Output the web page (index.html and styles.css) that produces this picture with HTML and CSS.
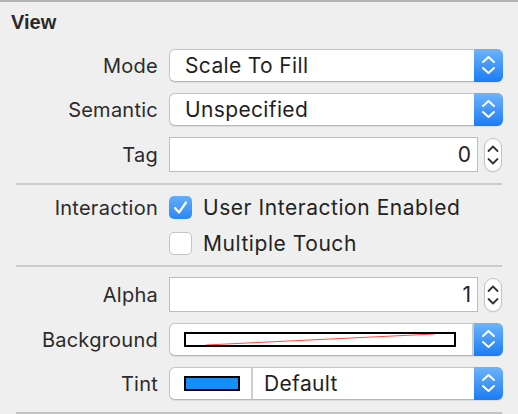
FILE: index.html
```html
<!DOCTYPE html>
<html>
<head>
<meta charset="utf-8">
<link rel="stylesheet" href="styles.css">
</head>
<body>
<div class="panel">
  <div class="title">View</div>

  <div class="section top">
    <div class="row">
      <div class="label">Mode</div>
      <div class="popup">
        <div class="popup-text">Scale To Fill</div>
        <div class="popup-btn"><svg width="29" height="33" viewBox="0 0 29 33"><path d="M9 13 L14.5 8 L20 13 M9 19 L14.5 24 L20 19" fill="none" stroke="#fff" stroke-width="2" stroke-linecap="round" stroke-linejoin="round"/></svg></div>
      </div>
    </div>
    <div class="row">
      <div class="label">Semantic</div>
      <div class="popup">
        <div class="popup-text">Unspecified</div>
        <div class="popup-btn"><svg width="29" height="33" viewBox="0 0 29 33"><path d="M9 13 L14.5 8 L20 13 M9 19 L14.5 24 L20 19" fill="none" stroke="#fff" stroke-width="2" stroke-linecap="round" stroke-linejoin="round"/></svg></div>
      </div>
    </div>
    <div class="row">
      <div class="label">Tag</div>
      <div class="field-group">
        <div class="field">0</div>
        <div class="stepper"><svg width="18" height="34" viewBox="0 0 18 34"><path d="M4.5 13 L9 8.5 L13.5 13 M4.5 21 L9 25.5 L13.5 21" fill="none" stroke="#333" stroke-width="1.8" stroke-linecap="round" stroke-linejoin="round"/></svg></div>
      </div>
    </div>
  </div>

  <div class="sep"></div>

  <div class="section checks">
    <div class="row check-row">
      <div class="label">Interaction</div>
      <div class="check">
        <span class="box checked"><svg width="23" height="23" viewBox="0 0 23 23"><path d="M6 12 L10 16.5 L17 6.5" fill="none" stroke="#fff" stroke-width="2.2" stroke-linecap="round" stroke-linejoin="round"/></svg></span>
        <span class="check-text">User Interaction Enabled</span>
      </div>
    </div>
    <div class="row check-row">
      <div class="label"></div>
      <div class="check">
        <span class="box"></span>
        <span class="check-text">Multiple Touch</span>
      </div>
    </div>
  </div>

  <div class="sep"></div>

  <div class="section bottom">
    <div class="row">
      <div class="label">Alpha</div>
      <div class="field-group">
        <div class="field">1</div>
        <div class="stepper"><svg width="18" height="34" viewBox="0 0 18 34"><path d="M4.5 13 L9 8.5 L13.5 13 M4.5 21 L9 25.5 L13.5 21" fill="none" stroke="#333" stroke-width="1.8" stroke-linecap="round" stroke-linejoin="round"/></svg></div>
      </div>
    </div>
    <div class="row">
      <div class="label">Background</div>
      <div class="popup">
        <div class="swatch-cell wide">
          <div class="swatch none"><svg width="272" height="15" viewBox="0 0 272 15" preserveAspectRatio="none"><line x1="20" y1="15" x2="252" y2="0" stroke="#ff2a1a" stroke-width="1"/></svg></div>
        </div>
        <div class="vdiv"></div>
        <div class="popup-btn"><svg width="29" height="33" viewBox="0 0 29 33"><path d="M9 13 L14.5 8 L20 13 M9 19 L14.5 24 L20 19" fill="none" stroke="#fff" stroke-width="2" stroke-linecap="round" stroke-linejoin="round"/></svg></div>
      </div>
    </div>
    <div class="row">
      <div class="label">Tint</div>
      <div class="popup">
        <div class="swatch-cell">
          <div class="swatch blue"></div>
        </div>
        <div class="vdiv"></div>
        <div class="popup-text tint-text">Default</div>
        <div class="popup-btn"><svg width="29" height="33" viewBox="0 0 29 33"><path d="M9 13 L14.5 8 L20 13 M9 19 L14.5 24 L20 19" fill="none" stroke="#fff" stroke-width="2" stroke-linecap="round" stroke-linejoin="round"/></svg></div>
      </div>
    </div>
  </div>

  <div class="sep last"></div>
</div>
</body>
</html>
```

FILE: styles.css
```css
html, body {
  margin: 0;
  padding: 0;
  background: #efefef;
}

body {
  width: 518px;
  height: 414px;
  overflow: hidden;
  font-family: Inter, "Liberation Sans", Arial, sans-serif;
  color: #232323;
}

.panel {
  border-top: 2px solid #b3b3b3;
  height: 412px;
  box-sizing: border-box;
}

.title {
  font-family: "Liberation Sans", Arial, sans-serif;
  font-weight: bold;
  font-size: 20px;
  line-height: 24px;
  padding: 8px 0 0 11px;
  height: 39px;
  box-sizing: border-box;
  color: #2a2a2a;
}

.section {
  display: flex;
  flex-direction: column;
}

.section.top {
  gap: 11px;
  padding-top: 8px;
  padding-bottom: 11px;
}

.section.checks {
  gap: 12px;
  padding-top: 10px;
  padding-bottom: 10px;
}

.section.bottom {
  gap: 11px;
  padding-top: 10px;
  padding-bottom: 12px;
}

.row {
  display: grid;
  grid-template-columns: 158px 334px;
  column-gap: 11px;
  align-items: center;
}

.label {
  text-align: right;
  font-size: 20px;
  letter-spacing: 0.25px;
  color: #2b2b2b;
}

.popup {
  height: 33px;
  box-sizing: border-box;
  border: 1px solid #c6c6c6;
  border-bottom-color: #b7b7b7;
  border-radius: 6px;
  background: #fff;
  display: flex;
  align-items: stretch;
  box-shadow: 0 0.5px 1px rgba(0,0,0,0.08);
}

.popup-text {
  flex: 1;
  padding-left: 15px;
  font-size: 21px;
  line-height: 31px;
  color: #1f1f1f;
  letter-spacing: 0.35px;
}

.popup-btn {
  width: 29px;
  margin: -1px -1px -1px 0;
  border-radius: 0 6px 6px 0;
  background: linear-gradient(#6db4fa, #1a7cf5);
  display: flex;
}

.field-group {
  display: flex;
  align-items: center;
  gap: 6px;
}

.field {
  width: 309px;
  height: 35px;
  box-sizing: border-box;
  border: 1px solid #bdbdbd;
  background: #fff;
  text-align: right;
  padding-right: 6px;
  font-size: 21px;
  line-height: 33px;
  color: #1f1f1f;
}

.stepper {
  width: 18px;
  height: 34px;
  box-sizing: border-box;
  border: 1px solid #c4c4c4;
  border-radius: 9px;
  background: #fff;
  display: flex;
  align-items: center;
  justify-content: center;
  overflow: hidden;
  box-shadow: 0 0.5px 1px rgba(0,0,0,0.1);
}

.stepper svg {
  flex: none;
}

.sep {
  height: 2px;
  background: #cbcbcb;
  margin-left: 16px;
  width: 486px;
}

.sep.last {
  background: #c3c3c3;
  height: 3px;
}

.check-row {
  height: 24px;
}

.check {
  display: flex;
  align-items: center;
  gap: 11px;
}

.box {
  width: 23px;
  height: 23px;
  box-sizing: border-box;
  border: 1px solid #c4c4c4;
  border-radius: 5px;
  background: #fff;
  display: flex;
}

.box.checked {
  border: none;
  background: linear-gradient(#64aefa, #2a86f6);
}

.check-text {
  font-size: 21px;
  letter-spacing: 0.55px;
  color: #232323;
}

.swatch-cell {
  width: 81px;
  display: flex;
  align-items: center;
  padding-left: 14px;
  box-sizing: border-box;
}

.swatch-cell.wide {
  flex: 1;
  width: auto;
}

.swatch {
  box-sizing: border-box;
  height: 15px;
  border: 2px solid #000;
}

.swatch.none {
  width: 272px;
  background: #fff;
  display: flex;
  overflow: hidden;
}

.swatch.none svg {
  width: 100%;
  height: 100%;
}

.swatch.blue {
  width: 56px;
  background: #158ef9;
}

.vdiv {
  width: 2px;
  background: #cdcdcd;
}

.popup-text.tint-text {
  padding-left: 11px;
}
```
